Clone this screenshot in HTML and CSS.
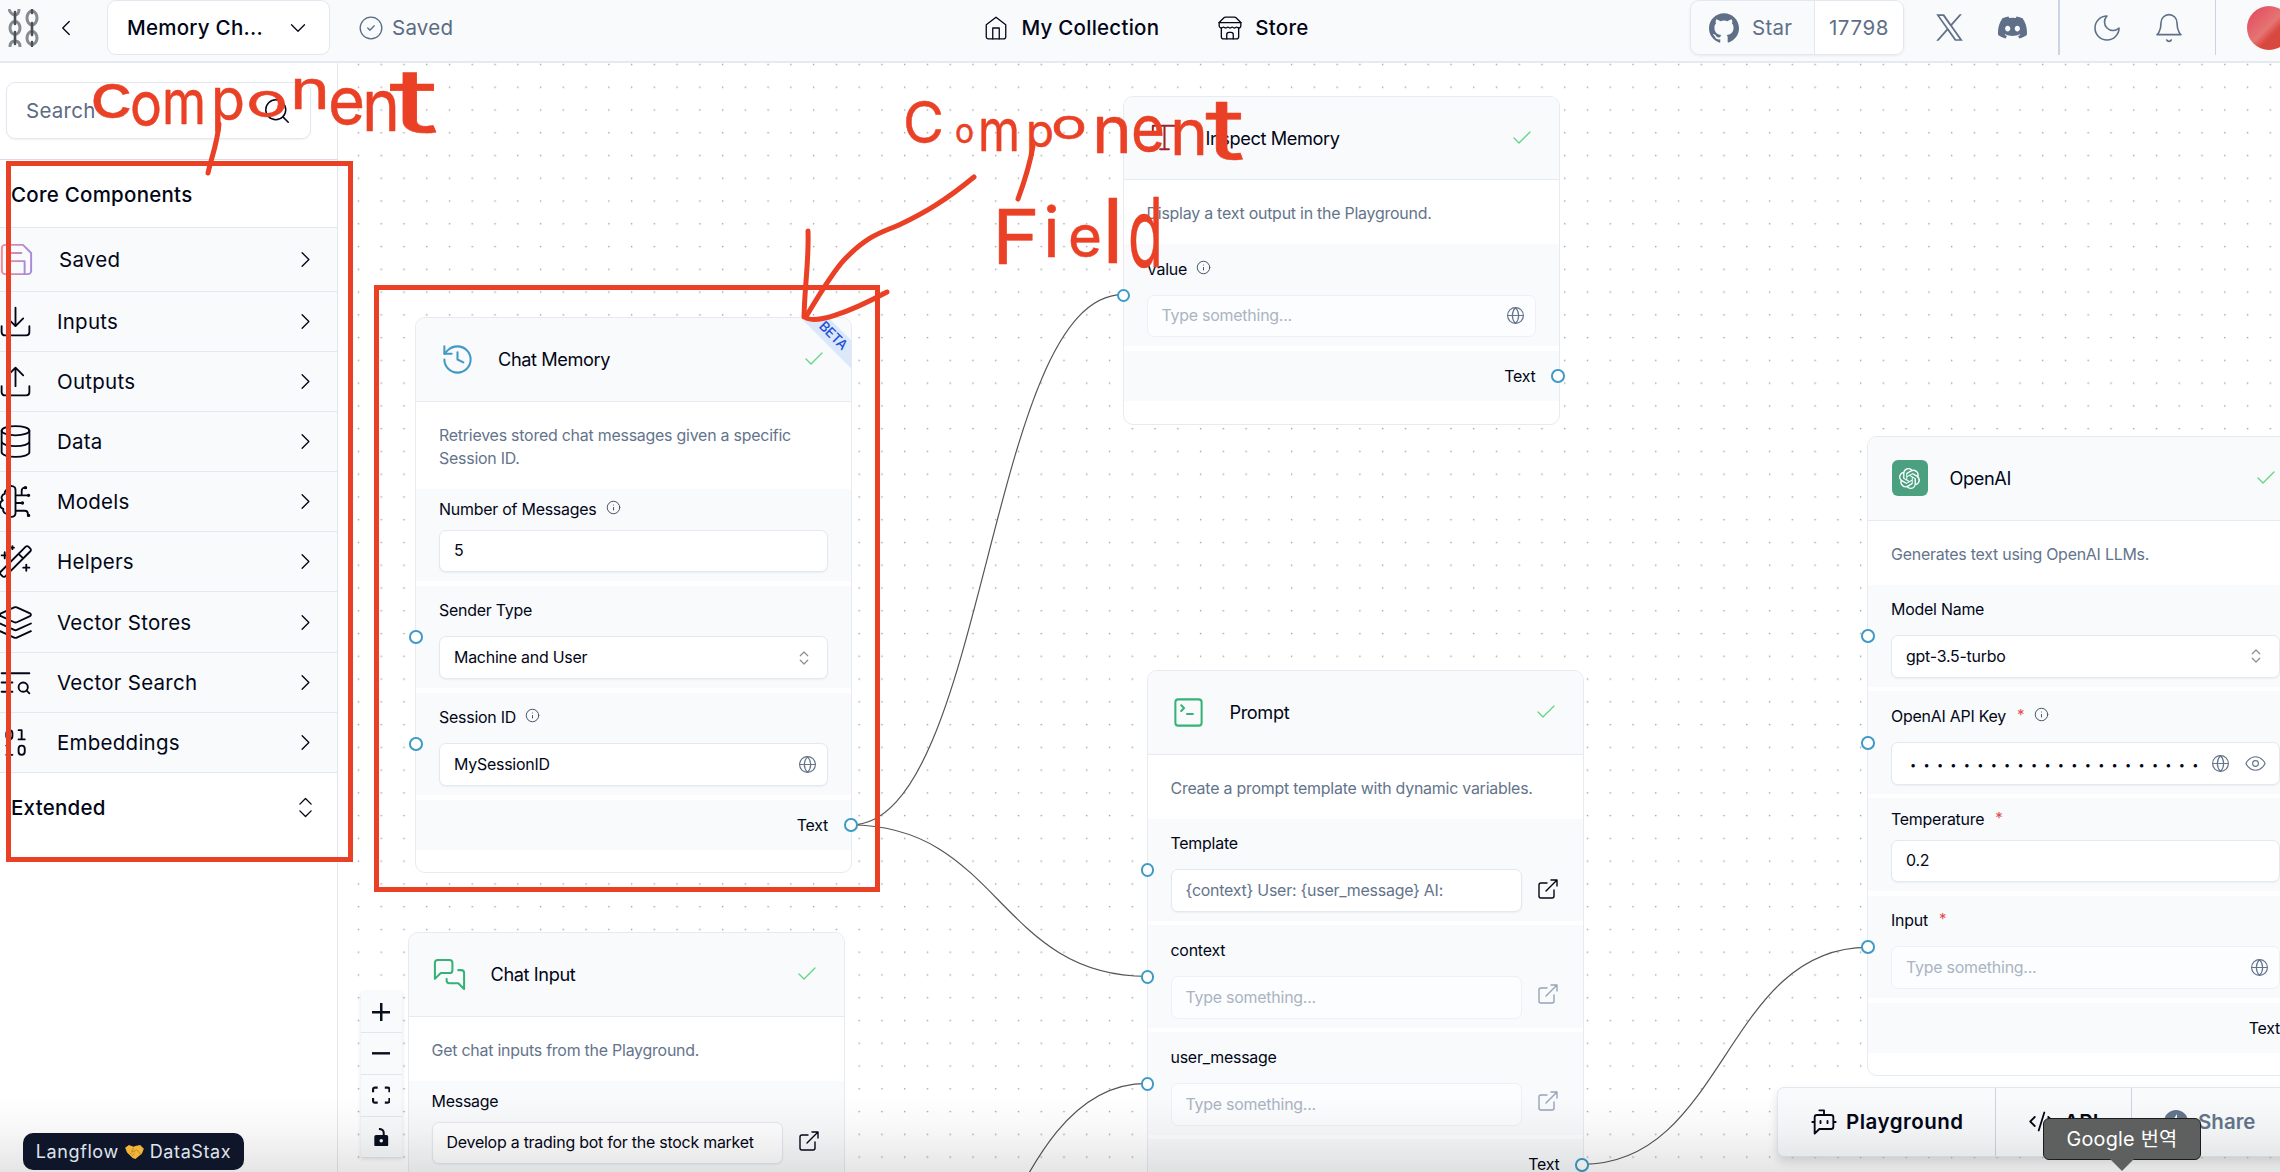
FILE: index.html
```html
<!DOCTYPE html>
<html lang="en">
<head>
<meta charset="utf-8">
<title>Langflow</title>
<link rel="stylesheet" href="styles.css">
</head>
<body>
<svg class="sprite" aria-hidden="true">
  <defs>
    <linearGradient id="save-gradient" x1="0" y1="0" x2="1" y2="0"><stop offset="0" stop-color="#f28a9b"/><stop offset="1" stop-color="#a78bda"/></linearGradient>
    <symbol id="i-left" viewBox="0 0 24 24"><path d="m15 18-6-6 6-6"/></symbol>
    <symbol id="i-right" viewBox="0 0 24 24"><path d="m9 18 6-6-6-6"/></symbol>
    <symbol id="i-down" viewBox="0 0 24 24"><path d="m6 9 6 6 6-6"/></symbol>
    <symbol id="i-updown" viewBox="0 0 24 24"><path d="m7 15 5 5 5-5M7 9l5-5 5 5"/></symbol>
    <symbol id="i-check" viewBox="0 0 24 24"><path d="M20 6 9 17l-5-5"/></symbol>
    <symbol id="i-circlecheck" viewBox="0 0 24 24"><circle cx="12" cy="12" r="10"/><path d="m9 12 2 2 4-4"/></symbol>
    <symbol id="i-home" viewBox="0 0 24 24"><path d="m3 9 9-7 9 7v11a2 2 0 0 1-2 2H5a2 2 0 0 1-2-2z"/><path d="M9 22V12h6v10"/></symbol>
    <symbol id="i-store" viewBox="0 0 24 24"><path d="m2 7 4.41-4.41A2 2 0 0 1 7.83 2h8.34a2 2 0 0 1 1.42.59L22 7"/><path d="M4 12v8a2 2 0 0 0 2 2h12a2 2 0 0 0 2-2v-8"/><path d="M15 22v-4a2 2 0 0 0-2-2h-2a2 2 0 0 0-2 2v4"/><path d="M2 7h20"/><path d="M22 7v3a2 2 0 0 1-2 2a2.7 2.7 0 0 1-1.59-.63.7.7 0 0 0-.82 0A2.7 2.7 0 0 1 16 12a2.7 2.7 0 0 1-1.59-.63.7.7 0 0 0-.82 0A2.7 2.7 0 0 1 12 12a2.7 2.7 0 0 1-1.59-.63.7.7 0 0 0-.82 0A2.7 2.7 0 0 1 8 12a2.7 2.7 0 0 1-1.59-.63.7.7 0 0 0-.82 0A2.7 2.7 0 0 1 4 12a2 2 0 0 1-2-2V7"/></symbol>
    <symbol id="i-github" viewBox="0 0 24 24"><path d="M12 .297c-6.63 0-12 5.373-12 12 0 5.303 3.438 9.8 8.205 11.385.6.113.82-.258.82-.577 0-.285-.01-1.04-.015-2.04-3.338.724-4.042-1.61-4.042-1.61C4.422 18.07 3.633 17.7 3.633 17.7c-1.087-.744.084-.729.084-.729 1.205.084 1.838 1.236 1.838 1.236 1.07 1.835 2.809 1.305 3.495.998.108-.776.417-1.305.76-1.605-2.665-.3-5.466-1.332-5.466-5.93 0-1.31.465-2.38 1.235-3.22-.135-.303-.54-1.523.105-3.176 0 0 1.005-.322 3.3 1.23.96-.267 1.98-.399 3-.405 1.02.006 2.04.138 3 .405 2.28-1.552 3.285-1.23 3.285-1.23.645 1.653.24 2.873.12 3.176.765.84 1.23 1.91 1.23 3.22 0 4.61-2.805 5.625-5.475 5.92.42.36.81 1.096.81 2.22 0 1.606-.015 2.896-.015 3.286 0 .315.21.69.825.57C20.565 22.092 24 17.592 24 12.297c0-6.627-5.373-12-12-12"/></symbol>
    <symbol id="i-x" viewBox="0 0 24 24"><path d="M14.095 10.316 22.286 1h-1.94l-7.116 8.088L7.551 1H1l8.59 12.231L1 23h1.94l7.51-8.543L16.449 23H23l-8.905-12.684zm-2.658 3.022-.872-1.218L3.64 2.432h2.982l5.59 7.821.867 1.219 7.265 10.166h-2.981l-5.926-8.3z"/></symbol>
    <symbol id="i-discord" viewBox="0 0 16 16"><path d="M13.545 2.907a13.2 13.2 0 0 0-3.257-1.011.05.05 0 0 0-.052.025c-.141.25-.297.577-.406.833a12.2 12.2 0 0 0-3.658 0 8 8 0 0 0-.412-.833.05.05 0 0 0-.052-.025c-1.125.194-2.22.534-3.257 1.011a.04.04 0 0 0-.021.018C.356 6.024-.213 9.047.066 12.032q.003.022.021.037a13.3 13.3 0 0 0 3.995 2.02.05.05 0 0 0 .056-.019q.463-.63.818-1.329a.05.05 0 0 0-.01-.059l-.018-.011a9 9 0 0 1-1.248-.595.05.05 0 0 1-.02-.066l.015-.019q.127-.095.248-.195a.05.05 0 0 1 .051-.007c2.619 1.196 5.454 1.196 8.041 0a.05.05 0 0 1 .053.007q.121.1.248.195a.05.05 0 0 1-.004.085 8 8 0 0 1-1.249.594.05.05 0 0 0-.03.03.05.05 0 0 0 .003.041c.24.465.515.909.817 1.329a.05.05 0 0 0 .056.019 13.2 13.2 0 0 0 4.001-2.02.05.05 0 0 0 .021-.037c.334-3.451-.559-6.449-2.366-9.106a.03.03 0 0 0-.02-.019m-8.198 7.307c-.789 0-1.438-.724-1.438-1.612s.637-1.613 1.438-1.613c.807 0 1.45.73 1.438 1.613 0 .888-.637 1.612-1.438 1.612m5.316 0c-.788 0-1.438-.724-1.438-1.612s.637-1.613 1.438-1.613c.807 0 1.451.73 1.438 1.613 0 .888-.631 1.612-1.438 1.612"/></symbol>
    <symbol id="i-moon" viewBox="0 0 24 24"><path d="M12 3a6 6 0 0 0 9 9 9 9 0 1 1-9-9Z"/></symbol>
    <symbol id="i-bell" viewBox="0 0 24 24"><path d="M6 8a6 6 0 0 1 12 0c0 7 3 9 3 9H3s3-2 3-9"/><path d="M10.3 21a1.94 1.94 0 0 0 3.4 0"/></symbol>
    <symbol id="i-search" viewBox="0 0 24 24"><circle cx="11" cy="11" r="8"/><path d="m21 21-4.3-4.3"/></symbol>
    <symbol id="i-save" viewBox="0 0 24 24"><path d="M19 21H5a2 2 0 0 1-2-2V5a2 2 0 0 1 2-2h11l5 5v11a2 2 0 0 1-2 2z"/><path d="M17 21v-8H7v8M7 3v5h8"/></symbol>
    <symbol id="i-download" viewBox="0 0 24 24"><path d="M21 15v4a2 2 0 0 1-2 2H5a2 2 0 0 1-2-2v-4M7 10l5 5 5-5M12 15V3"/></symbol>
    <symbol id="i-upload" viewBox="0 0 24 24"><path d="M21 15v4a2 2 0 0 1-2 2H5a2 2 0 0 1-2-2v-4M17 8l-5-5-5 5M12 3v12"/></symbol>
    <symbol id="i-database" viewBox="0 0 24 24"><ellipse cx="12" cy="5" rx="9" ry="3"/><path d="M3 5v14a9 3 0 0 0 18 0V5M3 12a9 3 0 0 0 18 0"/></symbol>
    <symbol id="i-brain" viewBox="0 0 24 24"><path d="M12 4.500a2.500 2.500 0 0 0-4.960-.460 2.500 2.500 0 0 0-1.980 3 2.500 2.500 0 0 0-1.320 4.240 3 3 0 0 0 .340 5.580 2.500 2.500 0 0 0 2.960 3.080 2.500 2.500 0 0 0 4.910.050L12 20V4.500ZM16 8V5c0-1.100.900-2 2-2M12 13h4M12 18h6a2 2 0 0 1 2 2v1M12 8h8"/><circle cx="20.500" cy="8" r=".5"/><circle cx="16.500" cy="13" r=".5"/><circle cx="20.500" cy="21" r=".5"/><circle cx="18.500" cy="3" r=".5"/></symbol>
    <symbol id="i-wand" viewBox="0 0 24 24"><path d="m21.64 3.64-1.28-1.28a1.21 1.21 0 0 0-1.72 0L2.36 18.64a1.21 1.21 0 0 0 0 1.72l1.28 1.28a1.2 1.2 0 0 0 1.72 0L21.64 5.36a1.2 1.2 0 0 0 0-1.72M14 7l3 3M5 6v4M19 14v4M10 2v2M7 8H3M21 16h-4M11 3H9"/></symbol>
    <symbol id="i-layers" viewBox="0 0 24 24"><path d="m12.83 2.18a2 2 0 0 0-1.66 0L2.6 6.08a1 1 0 0 0 0 1.83l8.58 3.91a2 2 0 0 0 1.66 0l8.58-3.9a1 1 0 0 0 0-1.83Z"/><path d="m22 17.65-9.17 4.16a2 2 0 0 1-1.66 0L2 17.65M22 12.65l-9.17 4.16a2 2 0 0 1-1.66 0L2 12.65"/></symbol>
    <symbol id="i-textsearch" viewBox="0 0 24 24"><path d="M21 6H3M10 12H3M10 18H3"/><circle cx="17" cy="15" r="3"/><path d="m21 19-1.9-1.9"/></symbol>
    <symbol id="i-binary" viewBox="0 0 24 24"><rect x="14" y="14" width="4" height="6" rx="2"/><rect x="6" y="4" width="4" height="6" rx="2"/><path d="M6 20h4M14 10h4M6 14h2v6M14 4h2v6"/></symbol>
    <symbol id="i-history" viewBox="0 0 24 24"><path d="M3 12a9 9 0 1 0 9-9 9.75 9.75 0 0 0-6.74 2.74L3 8"/><path d="M3 3v5h5M12 7v5l4 2"/></symbol>
    <symbol id="i-messages" viewBox="0 0 24 24"><path d="M14 9a2 2 0 0 1-2 2H6l-4 4V4a2 2 0 0 1 2-2h8a2 2 0 0 1 2 2zM18 9h2a2 2 0 0 1 2 2v11l-4-4h-6a2 2 0 0 1-2-2v-1"/></symbol>
    <symbol id="i-type" viewBox="0 0 24 24"><path d="M4 7V4h16v3M9 20h6M12 4v16"/></symbol>
    <symbol id="i-terminal" viewBox="0 0 24 24"><path d="m7 11 2-2-2-2M11 13h4"/><rect x="3" y="3" width="18" height="18" rx="2"/></symbol>
    <symbol id="i-info" viewBox="0 0 24 24"><circle cx="12" cy="12" r="10"/><path d="M12 16v-4M12 8h.01"/></symbol>
    <symbol id="i-globe" viewBox="0 0 24 24"><circle cx="12" cy="12" r="10"/><path d="M12 2a14.5 14.5 0 0 0 0 20 14.5 14.5 0 0 0 0-20M2 12h20"/></symbol>
    <symbol id="i-external" viewBox="0 0 24 24"><path d="M15 3h6v6M10 14 21 3M18 13v6a2 2 0 0 1-2 2H5a2 2 0 0 1-2-2V8a2 2 0 0 1 2-2h6"/></symbol>
    <symbol id="i-eye" viewBox="0 0 24 24"><path d="M2 12s3-7 10-7 10 7 10 7-3 7-10 7-10-7-10-7Z"/><circle cx="12" cy="12" r="3"/></symbol>
    <symbol id="i-bot" viewBox="0 0 24 24"><path d="M12 6V2H8M8 18l-4 4V8a2 2 0 0 1 2-2h12a2 2 0 0 1 2 2v8a2 2 0 0 1-2 2ZM2 12h2M9 11v2M15 11v2M20 12h2"/></symbol>
    <symbol id="i-code" viewBox="0 0 24 24"><path d="m18 16 4-4-4-4M6 8l-4 4 4 4M14.5 4l-5 16"/></symbol>
    <symbol id="i-openai" viewBox="0 0 24 24"><path d="M22.2819 9.8211a5.9847 5.9847 0 0 0-.5157-4.9108 6.0462 6.0462 0 0 0-6.5098-2.9A6.0651 6.0651 0 0 0 4.9807 4.1818a5.9847 5.9847 0 0 0-3.9977 2.9 6.0462 6.0462 0 0 0 .7427 7.0966 5.98 5.98 0 0 0 .511 4.9107 6.051 6.051 0 0 0 6.5146 2.9001A5.9847 5.9847 0 0 0 13.2599 24a6.0557 6.0557 0 0 0 5.7718-4.2058 5.9894 5.9894 0 0 0 3.9977-2.9001 6.0557 6.0557 0 0 0-.7475-7.0729zm-9.022 12.6081a4.4755 4.4755 0 0 1-2.8764-1.0408l.1419-.0804 4.7783-2.7582a.7948.7948 0 0 0 .3927-.6813v-6.7369l2.02 1.1686a.071.071 0 0 1 .038.0615v5.5826a4.504 4.504 0 0 1-4.4945 4.4944zm-9.6607-4.1254a4.4708 4.4708 0 0 1-.5346-3.0137l.142.0852 4.783 2.7582a.7712.7712 0 0 0 .7806 0l5.8428-3.3685v2.3324a.0804.0804 0 0 1-.0332.0615L9.74 19.9502a4.4992 4.4992 0 0 1-6.1408-1.6464zM2.3408 7.8956a4.485 4.485 0 0 1 2.3655-1.9728V11.6a.7664.7664 0 0 0 .3879.6765l5.8144 3.3543-2.0201 1.1685a.0757.0757 0 0 1-.071 0l-4.8303-2.7865A4.504 4.504 0 0 1 2.3408 7.872zm16.5963 3.8558L13.1038 8.364 15.1192 7.2a.0757.0757 0 0 1 .071 0l4.8303 2.7913a4.4944 4.4944 0 0 1-.6765 8.1042v-5.6772a.79.79 0 0 0-.407-.667zm2.0107-3.0231l-.142-.0852-4.7735-2.7818a.7759.7759 0 0 0-.7854 0L9.409 9.2297V6.8974a.0662.0662 0 0 1 .0284-.0615l4.8303-2.7866a4.4992 4.4992 0 0 1 6.6802 4.66zM8.3065 12.863l-2.02-1.1638a.0804.0804 0 0 1-.038-.0567V6.0742a4.4992 4.4992 0 0 1 7.3757-3.4537l-.142.0805L8.704 5.459a.7948.7948 0 0 0-.3927.6813zm1.0976-2.3654l2.602-1.4998 2.6069 1.4998v2.9994l-2.5974 1.4997-2.6067-1.4997Z"/></symbol>
  </defs>
</svg>

<div class="app">
  <header class="topbar">
    <div class="topbar-left">
      <svg class="chains" viewBox="0 0 32 38">
        <g class="chain-link">
          <path d="M1 0c1 4 4 6 6 6s4-2 4-6"/><ellipse cx="7" cy="19" rx="5" ry="6.5"/><path d="M2 38c0-4 2-6 5-6s5 2 5 6"/>
          <ellipse cx="24" cy="9" rx="5" ry="7"/><ellipse cx="24" cy="29" rx="5" ry="6.5"/>
        </g>
        <g class="chain-bar"><path d="M7 3v12M7 23v12M24 1v3M24 14v12M24 33v4"/></g>
      </svg>
      <svg class="icon back"><use href="#i-left"/></svg>
      <button class="flow-name"><span>Memory Ch...</span><svg class="icon flow-caret"><use href="#i-down"/></svg></button>
      <div class="saved"><svg class="icon"><use href="#i-circlecheck"/></svg><span>Saved</span></div>
    </div>
    <nav class="topbar-nav">
      <a class="nav-link"><svg class="icon"><use href="#i-home"/></svg><span>My Collection</span></a>
      <a class="nav-link"><svg class="icon"><use href="#i-store"/></svg><span>Store</span></a>
    </nav>
    <div class="topbar-right">
      <div class="star">
        <div class="star-label"><svg class="solid"><use href="#i-github"/></svg><span>Star</span></div>
        <div class="star-count">17798</div>
      </div>
      <svg class="solid x-logo"><use href="#i-x"/></svg>
      <svg class="solid discord"><use href="#i-discord"/></svg>
      <i class="rule"></i>
      <svg class="icon moon"><use href="#i-moon"/></svg>
      <svg class="icon bell"><use href="#i-bell"/></svg>
      <i class="rule"></i>
      <div class="avatar"></div>
    </div>
  </header>

  <div class="body">
    <aside class="sidebar">
      <div class="search-area"><div class="search"><span>Search</span><svg class="icon"><use href="#i-search"/></svg></div></div>
      <div class="side-head">Core Components</div>
      <ul class="side-list">
        <li class="side-item side-saved"><svg class="icon"><use href="#i-save"/></svg><span>Saved</span><svg class="icon chev"><use href="#i-right"/></svg></li>
        <li class="side-item"><svg class="icon"><use href="#i-download"/></svg><span>Inputs</span><svg class="icon chev"><use href="#i-right"/></svg></li>
        <li class="side-item"><svg class="icon"><use href="#i-upload"/></svg><span>Outputs</span><svg class="icon chev"><use href="#i-right"/></svg></li>
        <li class="side-item"><svg class="icon"><use href="#i-database"/></svg><span>Data</span><svg class="icon chev"><use href="#i-right"/></svg></li>
        <li class="side-item"><svg class="icon"><use href="#i-brain"/></svg><span>Models</span><svg class="icon chev"><use href="#i-right"/></svg></li>
        <li class="side-item"><svg class="icon"><use href="#i-wand"/></svg><span>Helpers</span><svg class="icon chev"><use href="#i-right"/></svg></li>
        <li class="side-item"><svg class="icon"><use href="#i-layers"/></svg><span>Vector Stores</span><svg class="icon chev"><use href="#i-right"/></svg></li>
        <li class="side-item"><svg class="icon"><use href="#i-textsearch"/></svg><span>Vector Search</span><svg class="icon chev"><use href="#i-right"/></svg></li>
        <li class="side-item"><svg class="icon"><use href="#i-binary"/></svg><span>Embeddings</span><svg class="icon chev"><use href="#i-right"/></svg></li>
      </ul>
      <div class="side-extended"><span>Extended</span><svg class="icon"><use href="#i-updown"/></svg></div>
    </aside>
    <main class="canvas"></main>
  </div>
</div>

<!-- Flow graph: dots, edges and nodes share page coordinates -->
<div class="graph">
  <svg class="edges" viewBox="0 0 2280 1172">
    <defs><pattern id="dots" patternUnits="userSpaceOnUse" x="346.95" y="52.95" width="22.76" height="22.763"><rect x="10.8" y="10.8" width="1.4" height="1.4"/></pattern></defs>
    <rect x="339" y="63" width="1941" height="1109" fill="url(#dots)"/>
    <g class="edge">
      <path d="M850.7 825C987 825 987 294.7 1123 294.7"/>
      <path d="M850.7 825C999 825 999 976.3 1147 976.3"/>
      <path d="M843 1394C995 1394 995 1083.3 1147 1083.3"/>
      <path d="M1582.5 1164.3C1725 1164.3 1725 947.3 1867.5 947.3"/>
    </g>
  </svg>

  <article class="node chat-memory">
    <div class="ribbon-clip"><span class="ribbon">BETA</span></div>
    <header class="node-head"><svg class="icon node-icon blue"><use href="#i-history"/></svg><h2>Chat Memory</h2><svg class="icon tick"><use href="#i-check"/></svg></header>
    <p class="desc">Retrieves stored chat messages given a specific Session ID.</p>
    <div class="field plain"><label>Number of Messages<svg class="icon info"><use href="#i-info"/></svg></label><div class="input">5</div></div>
    <div class="field"><i class="port in"></i><label>Sender Type</label><div class="input"><span>Machine and User</span><svg class="icon select"><use href="#i-updown"/></svg></div></div>
    <div class="field"><i class="port in"></i><label>Session ID<svg class="icon info"><use href="#i-info"/></svg></label><div class="input"><span>MySessionID</span><svg class="icon globe"><use href="#i-globe"/></svg></div></div>
    <div class="output">Text<i class="port out"></i></div>
  </article>

  <article class="node chat-input">
    <header class="node-head"><svg class="icon node-icon green"><use href="#i-messages"/></svg><h2>Chat Input</h2><svg class="icon tick"><use href="#i-check"/></svg></header>
    <p class="desc">Get chat inputs from the Playground.</p>
    <div class="field plain"><label>Message</label><div class="row"><div class="input">Develop a trading bot for the stock market</div><svg class="icon ext"><use href="#i-external"/></svg></div></div>
  </article>

  <article class="node inspect-memory">
    <header class="node-head"><svg class="icon node-icon maroon"><use href="#i-type"/></svg><h2>Inspect Memory</h2><svg class="icon tick"><use href="#i-check"/></svg></header>
    <p class="desc">Display a text output in the Playground.</p>
    <div class="field"><i class="port in"></i><label>Value<svg class="icon info"><use href="#i-info"/></svg></label><div class="input disabled"><span>Type something...</span><svg class="icon globe"><use href="#i-globe"/></svg></div></div>
    <div class="output">Text<i class="port out"></i></div>
  </article>

  <article class="node prompt">
    <header class="node-head"><svg class="icon node-icon green"><use href="#i-terminal"/></svg><h2>Prompt</h2><svg class="icon tick"><use href="#i-check"/></svg></header>
    <p class="desc">Create a prompt template with dynamic variables.</p>
    <div class="field"><i class="port in"></i><label>Template</label><div class="row"><div class="input muted">{context} User: {user_message} AI:</div><svg class="icon ext"><use href="#i-external"/></svg></div></div>
    <div class="field"><i class="port in"></i><label>context</label><div class="row"><div class="input disabled">Type something...</div><svg class="icon ext faded"><use href="#i-external"/></svg></div></div>
    <div class="field"><i class="port in"></i><label>user_message</label><div class="row"><div class="input disabled">Type something...</div><svg class="icon ext faded"><use href="#i-external"/></svg></div></div>
    <div class="output">Text<i class="port out"></i></div>
  </article>

  <article class="node openai">
    <header class="node-head"><span class="openai-badge"><svg class="solid"><use href="#i-openai"/></svg></span><h2>OpenAI</h2><svg class="icon tick"><use href="#i-check"/></svg></header>
    <p class="desc">Generates text using OpenAI LLMs.</p>
    <div class="field"><i class="port in"></i><label>Model Name</label><div class="input"><span>gpt-3.5-turbo</span><svg class="icon select"><use href="#i-updown"/></svg></div></div>
    <div class="field"><i class="port in"></i><label>OpenAI API Key<b>*</b><svg class="icon info after-star"><use href="#i-info"/></svg></label><div class="input"><span class="secret">••••••••••••••••••••••</span><svg class="icon globe secret-globe"><use href="#i-globe"/></svg><svg class="icon eye"><use href="#i-eye"/></svg></div></div>
    <div class="field plain"><label>Temperature<b>*</b></label><div class="input">0.2</div></div>
    <div class="field"><i class="port in"></i><label>Input<b>*</b></label><div class="input disabled"><span>Type something...</span><svg class="icon globe"><use href="#i-globe"/></svg></div></div>
    <div class="output">Text</div>
  </article>
</div>

<div class="controls">
  <button><svg viewBox="0 0 32 32"><path d="M32 18.133H18.133V32h-4.266V18.133H0v-4.266h13.867V0h4.266v13.867H32z"/></svg></button>
  <button><svg viewBox="0 -14 32 32"><path d="M0 0h32v4.2H0z"/></svg></button>
  <button><svg viewBox="0 0 32 30"><path d="M3.692 4.63c0-.53.4-.938.939-.938h5.215V0H4.708C2.13 0 0 2.054 0 4.63v5.216h3.692V4.631zM27.354 0h-5.2v3.692h5.17c.53 0 .984.4.984.939v5.215H32V4.631A4.624 4.624 0 0027.354 0zm.954 24.83c0 .532-.4.94-.939.94h-5.215v3.768h5.215c2.577 0 4.631-2.13 4.631-4.707v-5.139h-3.692v5.139zm-23.677.94c-.531 0-.939-.4-.939-.94v-5.138H0v5.139c0 2.577 2.13 4.707 4.708 4.707h5.138V25.77H4.631z"/></svg></button>
  <button><svg viewBox="0 0 32 32"><path fill-rule="evenodd" d="M12 0c6 0 10 3 10 8v4h3a3 3 0 0 1 3 3v14a3 3 0 0 1-3 3H7a3 3 0 0 1-3-3V15a3 3 0 0 1 3-3h11.500V8c0-3-2-4.500-6.500-4.500zM16 19a3 3 0 1 0 0 6 3 3 0 0 0 0-6z"/></svg></button>
</div>

<div class="actions">
  <div class="action playground"><svg class="icon"><use href="#i-bot"/></svg><span>Playground</span></div>
  <div class="action api"><svg class="icon"><use href="#i-code"/></svg><span>API</span></div>
  <div class="action share"><svg viewBox="0 0 24 24"><circle cx="12" cy="12" r="12" fill="#64748b"/><path d="M13 4 7 13h4l-1 7 7-10h-4z" fill="#f8fafc"/></svg><span>Share</span></div>
</div>

<div class="bottom-shade"></div>

<div class="credit"><span>Langflow</span>
  <svg viewBox="0 0 20 15"><path d="M0 3 4 0l5 2 2-1 5-1 4 4-2 5-7 6-3-1-6-6z" fill="#f2b63a"/><path d="m9 3-2 4c2 1 4-1 5-2l5 5M5 10l2-2M7 12l3-3" fill="none" stroke="#b97a1c" stroke-width=".9"/></svg>
  <span>DataStax</span></div>

<div class="tooltip">Google 번역</div>

<!-- Red pen markup over the screen -->
<svg class="markup" viewBox="0 0 2280 1172">
  <rect x="8.500" y="163.500" width="342" height="696"/>
  <rect x="376.500" y="287.500" width="501" height="602"/>
  <path d="M974 177C945 201 924 213 901 224C884 232 870 233 844 260C832 273 821 292 807 315"/>
  <path d="M808 231C809 262 805 280 804 317M804 316C812 326 848 313 887 292"/>
  <path d="M219 124C217 145 212 155 208 173M1033 146C1030 164 1025 180 1018 199"/>
  <g lengthAdjust="spacingAndGlyphs">
    <text font-size="62"><tspan x="90" y="118" textLength="43" lengthAdjust="spacingAndGlyphs">c</tspan></text>
    <text font-size="62"><tspan x="130" y="126" textLength="32" lengthAdjust="spacingAndGlyphs">o</tspan></text>
    <text font-size="62"><tspan x="162" y="124" textLength="44" lengthAdjust="spacingAndGlyphs">m</tspan></text>
    <text font-size="58"><tspan x="211" y="120" textLength="34" lengthAdjust="spacingAndGlyphs">p</tspan></text>
    <text font-size="48"><tspan x="246" y="117" textLength="42" lengthAdjust="spacingAndGlyphs">o</tspan></text>
    <text font-size="54"><tspan x="290" y="109" textLength="40" lengthAdjust="spacingAndGlyphs">n</tspan></text>
    <text font-size="66"><tspan x="328" y="124" textLength="37" lengthAdjust="spacingAndGlyphs">e</tspan></text>
    <text font-size="72"><tspan x="362" y="131" textLength="38" lengthAdjust="spacingAndGlyphs">n</tspan></text>
    <text font-size="88"><tspan x="389" y="132" textLength="50" lengthAdjust="spacingAndGlyphs">t</tspan></text>
  </g>
  <g>
    <text font-size="58"><tspan x="903" y="143" textLength="41" lengthAdjust="spacingAndGlyphs">C</tspan></text>
    <text font-size="34"><tspan x="955" y="143" textLength="19" lengthAdjust="spacingAndGlyphs">o</tspan></text>
    <text font-size="58"><tspan x="978" y="151" textLength="42" lengthAdjust="spacingAndGlyphs">m</tspan></text>
    <text font-size="46"><tspan x="1026" y="147" textLength="28" lengthAdjust="spacingAndGlyphs">p</tspan></text>
    <text font-size="42"><tspan x="1051" y="139" textLength="36" lengthAdjust="spacingAndGlyphs">o</tspan></text>
    <text font-size="66"><tspan x="1092" y="153" textLength="40" lengthAdjust="spacingAndGlyphs">n</tspan></text>
    <text font-size="64"><tspan x="1131" y="151" textLength="34" lengthAdjust="spacingAndGlyphs">e</tspan></text>
    <text font-size="64"><tspan x="1170" y="155" textLength="38" lengthAdjust="spacingAndGlyphs">n</tspan></text>
    <text font-size="84"><tspan x="1205" y="159" textLength="40" lengthAdjust="spacingAndGlyphs">t</tspan></text>
  </g>
  <g>
    <text font-size="76"><tspan x="992" y="264" textLength="48" lengthAdjust="spacingAndGlyphs">F</tspan></text>
    <text font-size="70"><tspan x="1043" y="257">i</tspan></text>
    <text font-size="58"><tspan x="1068" y="257" textLength="34" lengthAdjust="spacingAndGlyphs">e</tspan></text>
    <text font-size="90"><tspan x="1102" y="263">l</tspan></text>
    <text font-size="96"><tspan x="1128" y="267" textLength="35" lengthAdjust="spacingAndGlyphs">d</tspan></text>
  </g>
</svg>
</body>
</html>
```
FILE: styles.css
```css
* { box-sizing: border-box; }
body {
  margin: 0;
  width: 2280px;
  height: 1172px;
  overflow: hidden;
  position: relative;
  background: #fff;
  color: #020617;
  font-family: Inter, "Noto Sans CJK KR", sans-serif;
  font-size: 20.500px;
  letter-spacing: .25px;
}
button { font: inherit; color: inherit; margin: 0; letter-spacing: inherit; }
.sprite { position: absolute; width: 0; height: 0; }
.icon { fill: none; stroke: currentColor; stroke-width: 1.2; stroke-linecap: round; stroke-linejoin: round; flex: none; }
.solid { fill: currentColor; flex: none; }

/* Top bar */
.app { display: flex; flex-direction: column; height: 1172px; }
.topbar { display: grid; grid-template-columns: 1fr auto 1fr; height: 63px; background: #f8fafc; border-bottom: 2px solid #e5e9f0; flex: none; }
.topbar-left, .topbar-nav, .topbar-right { display: flex; align-items: center; height: 55px; }
.topbar-left { padding-left: 8px; }
.topbar-nav { padding-left: 12px; }
.chains { width: 32px; height: 38px; }
.chain-link { fill: none; stroke: #858b90; stroke-width: 3; }
.chain-bar { fill: none; stroke: #4b5054; stroke-width: 2.6; stroke-linecap: round; }
.back { width: 26px; height: 26px; margin-left: 13px; }
.flow-name { display: flex; align-items: center; justify-content: space-between; width: 223px; height: 55px; margin-left: 28px; padding: 0 18px 0 19px; background: #fff; border: 1.500px solid #e2e8f0; border-radius: 9px; font-weight: 500; }
.flow-caret { width: 26px; height: 26px; }
.saved { display: flex; align-items: center; gap: 8px; margin-left: 28px; color: #5b6b84; }
.saved .icon { width: 26px; height: 26px; }
.nav-link { display: flex; align-items: center; gap: 12px; font-weight: 500; }
.nav-link + .nav-link { margin-left: 58px; }
.nav-link .icon { width: 26px; height: 26px; }
.topbar-right { justify-content: flex-start; color: #5f6f88; width: 590px; justify-self: end; }
.star { display: flex; flex: none; width: 214px; height: 55px; border: 1.500px solid #e2e8f0; border-radius: 9px; overflow: hidden; box-shadow: 0 1px 3px rgba(15, 23, 42, .07); }
.star-label { display: flex; align-items: center; gap: 13px; width: 124px; padding-left: 18px; border-right: 1.500px solid #e2e8f0; }
.star-label svg { width: 30px; height: 30px; }
.star-count { flex: 1; display: grid; place-items: center; background: #fff; letter-spacing: .6px; }
.x-logo { width: 29px; height: 29px; margin-left: 31px; }
.discord { width: 29px; height: 29px; margin-left: 34px; }
.rule { width: 1.500px; height: 55px; background: #cbd5e1; flex: none; }
.discord + .rule { margin-left: 31px; }
.moon { width: 32px; height: 32px; margin-left: 31px; }
.bell { width: 32px; height: 32px; margin-left: 30px; }
.bell + .rule { margin-left: 30px; }
.avatar { width: 44px; height: 44px; margin-left: 31px; border-radius: 50%; background: linear-gradient(135deg, #e2495d 5%, #e57573 48%, #d9483f 62%); flex: none; }

/* Sidebar */
.body { display: flex; flex: 1; min-height: 0; }
.sidebar { width: 338px; border-right: 1.500px solid #e2e8f0; background: #fff; flex: none; }
.canvas { flex: 1; }
.search-area { height: 97px; padding: 19px 0 0 6px; border-bottom: 1.500px solid #d5dce7; }
.search { display: flex; align-items: center; justify-content: space-between; width: 305px; height: 57px; padding: 0 18px 0 19px; border: 1.500px solid #e2e8f0; border-radius: 9px; color: #5b6b84; box-shadow: 0 1px 2px rgba(15, 23, 42, .06); }
.search .icon { width: 30px; height: 30px; color: #020617; }
.side-head { height: 67px; padding: 21px 0 0 11px; line-height: 28px; font-weight: 500; }
.side-list { list-style: none; margin: 0; padding: 0; background: #f8fafc; border-bottom: 1.500px solid #e2e8f0; }
.side-item { display: flex; align-items: center; height: 60.200px; border-top: 1.500px solid #e2e8f0; padding-right: 18px; }
.side-item > .icon:first-child { width: 37px; height: 37px; margin-left: -3px; stroke-width: 1.200; }
.side-item span { margin-left: 23px; flex: 1; }
.side-item .chev { width: 27px; height: 27px; }
.side-item.side-saved { height: 63.500px; }
.side-item.side-saved > .icon:first-child { width: 39px; height: 39px; stroke: url(#save-gradient); }
.side-extended { display: flex; align-items: center; justify-content: space-between; height: 68px; padding: 0 18px 0 11px; font-weight: 500; }
.side-extended .icon { width: 27px; height: 27px; }

/* Flow graph */
.graph { position: absolute; left: 0; top: 0; width: 2280px; height: 1172px; overflow: hidden; }
.edges { position: absolute; left: 0; top: 0; width: 2280px; height: 1172px; }
.edges pattern rect { fill: #a0a0a4; }
.edge { fill: none; stroke: #555; stroke-width: 1.200; }
.node { position: absolute; width: 437px; padding-bottom: 22.500px; background: #fff; border: 1.500px solid #e6eaf1; border-radius: 10px; font-size: 15.930px; letter-spacing: -.230px; }
.chat-memory { left: 415px; top: 317px; }
.chat-input { left: 407.500px; top: 932px; }
.inspect-memory { left: 1122.500px; top: 95.500px; }
.prompt { left: 1146.500px; top: 670px; }
.openai { left: 1867px; top: 436px; }
.node-head { display: flex; align-items: center; height: 83.500px; padding: 0 25px 0 23.500px; background: #f8fafc; border-bottom: 1.500px solid #e6eaf1; border-radius: 9px 9px 0 0; }
.node-head h2 { flex: 1; margin: 0 0 0 23.500px; font-size: 18.200px; font-weight: 400; letter-spacing: -.400px; }
.node-icon { width: 35px; height: 35px; stroke-width: 1.400; }
.blue { color: #3f9ac6; }
.green { color: #35b376; }
.maroon { color: #9b2226; }
.openai-badge { display: grid; place-items: center; width: 36px; height: 36px; border-radius: 6px; background: #4ba080; color: #fff; }
.openai-badge svg { width: 21px; height: 21px; }
.openai-badge + h2 { margin-left: 22px; }
.tick { width: 24px; height: 24px; color: #62d67f; stroke-width: 1.300; }
.desc { margin: 0; padding: 22px 23px 19px; color: #64748b; line-height: 23px; }
.field { position: relative; height: 102.400px; margin-bottom: 4.600px; padding: 13.500px 23px 0; background: #f8fafc; }
.field label { display: flex; align-items: center; height: 23px; margin-bottom: 14.200px; }
.field.plain { height: 92.700px; padding-top: 9.500px; }
.field.plain label { margin-bottom: 8.700px; }
.field b { margin: -4px 0 0 11px; font-weight: 400; font-size: 15px; color: #e5484d; }
.info { width: 15px; height: 15px; margin: -4px 0 0 9px; stroke-width: 1.600; color: #475569; }
.after-star { margin-left: 10px; }
.input { display: flex; align-items: center; justify-content: space-between; height: 42.600px; padding: 0 10px 0 14px; background: #fff; border: 1.500px solid #e4e9f0; border-radius: 7px; box-shadow: 0 1px 2px rgba(15, 23, 42, .05); white-space: nowrap; }
.input.muted { color: #64748b; }
.input.disabled { background: #fcfdfe; border-color: #edf1f5; color: #aab4c3; box-shadow: none; }
.select { width: 18px; height: 18px; margin-right: 4px; color: #8b8f98; stroke-width: 1.600; }
.globe { width: 19px; height: 19px; color: #64748b; stroke-width: 1.500; }
.eye { width: 23px; height: 23px; margin: 0 2px 0 11px; color: #64748b; }
.secret { letter-spacing: 7.250px; font-size: 11px; width: 302px; overflow: hidden; padding-top: 3px; margin-left: 4px; }
.secret-globe { margin-left: -4px; }
.row { display: flex; align-items: center; }
.row .input { width: 351px; }
.ext { width: 24px; height: 24px; margin: -3px 0 0 14px; stroke-width: 1.400; }
.ext.faded { color: #96a3b7; margin-top: -7px; }
.output { position: relative; height: 50.200px; padding: 0 23px; background: #f8fafc; text-align: right; line-height: 51px; }
.port { position: absolute; width: 13.600px; height: 13.600px; border: 2px solid #3f9ac6; border-radius: 50%; background: #fff; }
.port.in { left: -7px; top: 44.600px; }
.port.out { right: -6.500px; top: 18.500px; }
.ribbon-clip { position: absolute; right: 0; top: 0; width: 70px; height: 70px; overflow: hidden; border-radius: 0 9px 0 0; }
.ribbon { position: absolute; left: -1px; top: 8px; width: 106px; height: 19.500px; line-height: 19.500px; transform: rotate(45deg); background: #dbe7fb; color: #1d4ed8; font-size: 13.600px; font-weight: 500; text-align: center; }

/* Floating controls */
.controls { position: absolute; left: 360.500px; top: 991.500px; width: 41px; display: flex; flex-direction: column; box-shadow: 0 1px 4px rgba(0, 0, 0, .12); }
.controls button { display: grid; place-items: center; height: 41.700px; padding: 0; background: #f8fafc; border: 0; border-bottom: 1.500px solid #e2e5ec; }
.controls svg { width: 18.500px; height: 18.500px; fill: #0a0f1e; }
.actions { position: absolute; left: 1777px; top: 1086.500px; display: flex; width: 530px; height: 70.500px; background: #f8fafc; border: 1.500px solid #e2e8f0; border-radius: 7px; box-shadow: 0 5px 10px rgba(0, 0, 0, .13); font-weight: 600; }
.action { display: flex; align-items: center; }
.action svg { width: 27px; height: 27px; flex: none; }
.playground { width: 218px; padding-left: 32px; gap: 8px; border-right: 1.500px solid #cbd5e1; letter-spacing: .5px; }
.playground .icon { width: 28px; height: 28px; stroke-width: 1.600; }
.api { width: 136px; padding-left: 32px; gap: 9px; border-right: 1.500px solid #cbd5e1; }
.api .icon { stroke-width: 1.600; }
.share { flex: 1; padding-left: 32px; gap: 10px; color: #64748b; letter-spacing: 0; }
.share svg { width: 24px; height: 24px; }
.bottom-shade { position: absolute; left: 0; bottom: 0; width: 2280px; height: 76px; background: linear-gradient(rgba(0, 0, 0, 0), rgba(0, 0, 0, .03) 45%, rgba(0, 0, 0, .1)); }
.credit { position: absolute; left: 23px; top: 1133px; display: flex; align-items: center; justify-content: center; gap: 6px; width: 221px; height: 37px; border-radius: 10px; background: #10162a; color: #dfe4ec; font-size: 18px; letter-spacing: .6px; }
.credit svg { width: 19px; height: 14px; }
.tooltip { position: absolute; left: 2043px; top: 1118px; width: 158px; height: 42px; line-height: 40px; text-align: center; border: 1.500px solid #1c1c1c; border-radius: 6px; background: #5e6060; color: #fff; font-size: 19.800px; }
.tooltip::after { content: ""; position: absolute; left: 66px; top: 40px; border: 12px solid transparent; border-top-color: #5e6060; }

/* Markup */
.markup { position: absolute; left: 0; top: 0; width: 2280px; height: 1172px; fill: none; stroke: #ea4025; stroke-width: 5; stroke-linecap: round; stroke-linejoin: round; letter-spacing: 0; }
.markup rect { stroke-linejoin: miter; }
.markup text { fill: #ea4025; stroke-width: .5; }
```
